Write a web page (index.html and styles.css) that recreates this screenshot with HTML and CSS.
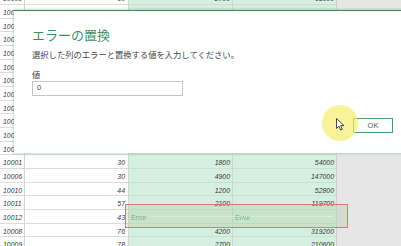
FILE: index.html
```html
<!DOCTYPE html>
<html lang="ja">
<head>
<meta charset="utf-8">
<link rel="stylesheet" href="styles.css">
</head>
<body>
<div class="table">
  <div class="row"><div class="c id">10003</div><div class="c n">60</div><div class="c g">2700</div><div class="c g">65000</div></div>
  <div class="row"><div class="c id">10005</div><div class="c n">44</div><div class="c g">1300</div><div class="c g">57200</div></div>
  <div class="row"><div class="c id">10002</div><div class="c n">35</div><div class="c g">1500</div><div class="c g">52500</div></div>
  <div class="row"><div class="c id">10004</div><div class="c n">52</div><div class="c g">3100</div><div class="c g">161200</div></div>
  <div class="row"><div class="c id">10007</div><div class="c n">61</div><div class="c g">2200</div><div class="c g">134200</div></div>
  <div class="row"><div class="c id">10013</div><div class="c n">28</div><div class="c g">1900</div><div class="c g">53200</div></div>
  <div class="row"><div class="c id">10014</div><div class="c n">39</div><div class="c g">2400</div><div class="c g">93600</div></div>
  <div class="row"><div class="c id">10015</div><div class="c n">47</div><div class="c g">3300</div><div class="c g">155100</div></div>
  <div class="row"><div class="c id">10016</div><div class="c n">33</div><div class="c g">1700</div><div class="c g">56100</div></div>
  <div class="row"><div class="c id">10017</div><div class="c n">55</div><div class="c g">2600</div><div class="c g">143000</div></div>
  <div class="row"><div class="c id">10018</div><div class="c n">41</div><div class="c g">2000</div><div class="c g">82000</div></div>
  <div class="row"><div class="c id">10019</div><div class="c n">64</div><div class="c g">3500</div><div class="c g">224000</div></div>
  <div class="row"><div class="c id">10001</div><div class="c n">30</div><div class="c g">1800</div><div class="c g">54000</div></div>
  <div class="row"><div class="c id">10006</div><div class="c n">30</div><div class="c g">4900</div><div class="c g">147000</div></div>
  <div class="row"><div class="c id">10010</div><div class="c n">44</div><div class="c g">1200</div><div class="c g">52800</div></div>
  <div class="row"><div class="c id">10011</div><div class="c n">57</div><div class="c g">2100</div><div class="c g">119700</div></div>
  <div class="row"><div class="c id">10012</div><div class="c n">43</div><div class="c g err">Error</div><div class="c g err">Error</div></div>
  <div class="row"><div class="c id">10008</div><div class="c n">76</div><div class="c g">4200</div><div class="c g">319200</div></div>
  <div class="row"><div class="c id">10009</div><div class="c n">78</div><div class="c g">2700</div><div class="c g">210600</div></div>
</div>

<div class="err-box"><span class="dots"></span></div>

<div class="dialog">
  <div class="title">エラーの置換</div>
  <div class="desc">選択した列のエラーと置換する値を入力してください。</div>
  <div class="label">値</div>
  <div class="input">0</div>
  <div class="footer"><div class="ok">OK</div></div>
</div>

<div class="halo"></div>
<svg class="cursor" width="9" height="13" viewBox="0 0 9 13"><path d="M0.5 0.5 L0.5 10.5 L3 8.1 L4.7 12 L6.3 11.3 L4.7 7.6 L8 7.6 Z" fill="#fff" stroke="#333" stroke-width="0.9" stroke-linejoin="round"/></svg>
</body>
</html>
```

FILE: styles.css
```css
html, body {
  margin: 0;
  padding: 0;
}
body {
  width: 401px;
  height: 246px;
  overflow: hidden;
  background: #e6e6e6;
  display: flow-root;
}
.table {
  width: 337px;
  margin-top: -8.68px;
}
.row {
  display: grid;
  grid-template-columns: 25px 104px 104px 104px;
  height: 13.68px;
}
.c {
  box-sizing: border-box;
  border-right: 1px solid #d4d4d4;
  border-bottom: 1px solid #dcdcdc;
  background: #fff;
  font-family: "Liberation Sans", Arial, sans-serif;
  font-style: italic;
  font-size: 6.9px;
  line-height: 15px;
  color: #3a3a3a;
  white-space: nowrap;
  overflow: hidden;
}
.id {
  padding-left: 3px;
}
.n {
  text-align: right;
  padding-right: 3px;
}
.g {
  background: #d5efe0;
  text-align: right;
  padding-right: 2px;
  border-bottom-color: #c4e2cf;
  border-right-color: #c2dccb;
}
.g:last-child {
  border-right-color: #d0d0d0;
}
.err {
  text-align: left;
  font-style: normal;
  color: #5f9f70;
  padding-left: 2px;
}
.err-box {
  position: absolute;
  left: 125px;
  top: 204px;
  width: 223px;
  height: 24px;
  box-sizing: border-box;
  border: 1.5px solid #e8726f;
  background: rgba(170, 202, 156, 0.3);
}
.dots {
  position: absolute;
  left: 22px;
  right: 14px;
  top: 11px;
  border-top: 1px dotted rgba(255, 255, 255, 0.6);
}
.dialog {
  position: absolute;
  left: 14px;
  top: 10px;
  width: 420px;
  height: 143px;
  box-sizing: border-box;
  background: #fff;
  border-top: 1.5px solid #3f8a5e;
  box-shadow: 0 0 2px 1px rgba(90, 150, 110, 0.35);
  padding: 16.5px 0 0 18px;
  font-family: "Noto Sans CJK JP", "Noto Sans", sans-serif;
}
.title {
  font-size: 13px;
  line-height: 13px;
  color: #3f8f63;
  height: 13px;
}
.desc {
  margin-top: 9px;
  font-size: 8.3px;
  line-height: 9px;
  color: #444;
}
.label {
  margin-top: 11px;
  font-size: 8.3px;
  line-height: 9px;
  color: #444;
}
.input {
  margin-top: 2.5px;
  width: 151px;
  height: 14.5px;
  box-sizing: border-box;
  border: 1px solid #c6c6c6;
  padding-left: 4px;
  font-family: "Liberation Sans", Arial, sans-serif;
  font-size: 7.5px;
  line-height: 12.5px;
  color: #555;
}
.footer {
  display: flex;
  justify-content: flex-end;
  padding-right: 41px;
  margin-top: 22px;
}
.ok {
  width: 40px;
  height: 15px;
  box-sizing: border-box;
  border: 1px solid #4f9a6b;
  text-align: center;
  font-family: "Liberation Sans", Arial, sans-serif;
  font-size: 7.5px;
  line-height: 13px;
  color: #555;
}
.halo {
  position: absolute;
  left: 322px;
  top: 105px;
  width: 36px;
  height: 36px;
  border-radius: 50%;
  background: rgba(244, 238, 110, 0.7);
}
.cursor {
  position: absolute;
  left: 336px;
  top: 118px;
}
```
